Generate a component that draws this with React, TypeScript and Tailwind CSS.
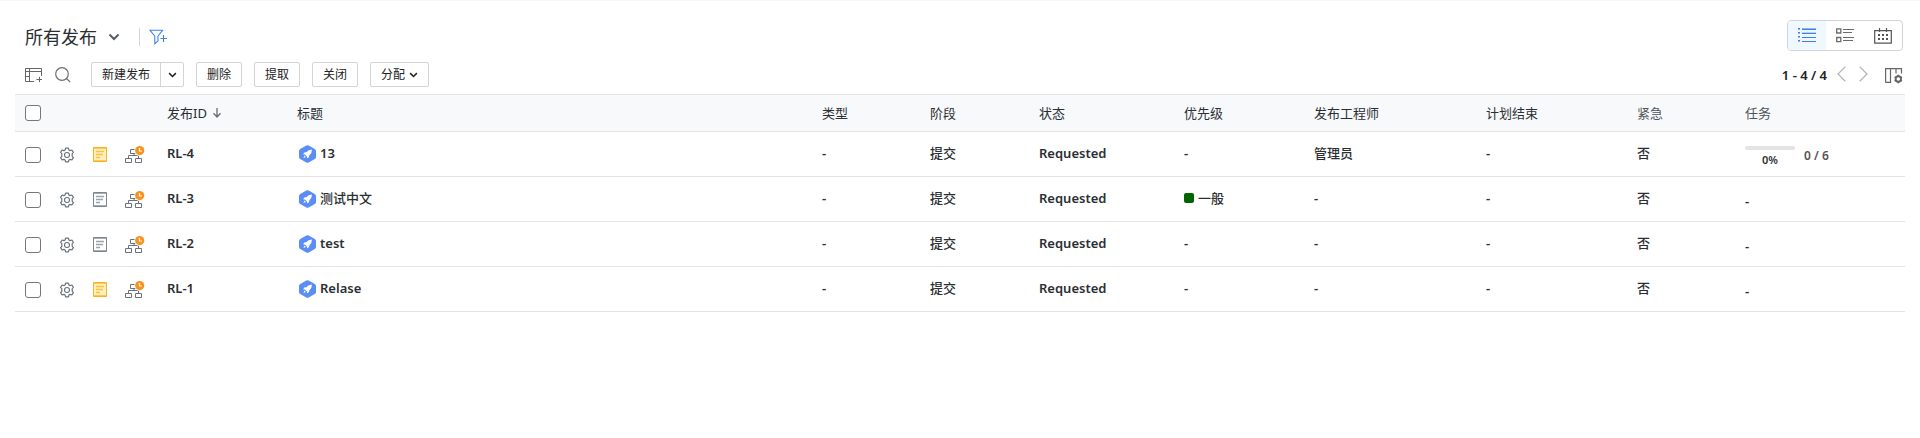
import { useState, type ReactNode } from "react";

type Release = {
  id: string;
  title: string;
  noted: boolean;
  stage: string;
  status: string;
  priority?: string;
  engineer?: string;
  urgent: string;
  tasks?: { done: number; total: number };
};

const releases: Release[] = [
  { id: "RL-4", title: "13", noted: true, stage: "提交", status: "Requested", engineer: "管理员", urgent: "否", tasks: { done: 0, total: 6 } },
  { id: "RL-3", title: "测试中文", noted: false, stage: "提交", status: "Requested", priority: "一般", urgent: "否" },
  { id: "RL-2", title: "test", noted: false, stage: "提交", status: "Requested", urgent: "否" },
  { id: "RL-1", title: "Relase", noted: true, stage: "提交", status: "Requested", urgent: "否" },
];

const isHan = (text: string) => /[\u4e00-\u9fff]/.test(text);

// Han glyphs look heavier than Latin ones at the same weight, so they get a lighter one.
function Value({ children }: { children: string }) {
  return <span className={isHan(children) ? "font-medium" : "font-semibold"}>{children}</span>;
}

function Chevron({ className }: { className: string }) {
  return (
    <svg viewBox="0 0 12 8" className={className} fill="none" stroke="currentColor" aria-hidden="true">
      <path d="M1.5 1.5 L6 6 L10.5 1.5" strokeWidth="2" />
    </svg>
  );
}

function FilterIcon() {
  return (
    <svg width="19" height="16" viewBox="0 0 19 16" fill="none" stroke="#3b82f0" aria-hidden="true">
      <path d="M.8 1.2 H13.8 L9 7 V11.8 L5.8 14.8 V7 Z" strokeWidth="1.1" strokeLinejoin="round" />
      <path d="M11.5 9.5 H18 M14.5 6 V13" strokeWidth="1.1" />
    </svg>
  );
}

function TableAddIcon() {
  return (
    <svg width="18" height="16" viewBox="0 0 18 16" fill="none" stroke="#666" aria-hidden="true">
      <path d="M9 14.5 H.5 V1.5 H16.5 V9 M.5 4.5 H16.5 M4.5 1.5 V14.5 M.5 9.5 H4.5" />
      <path d="M11.5 12.5 H17 M14.5 9.8 V15.2" />
    </svg>
  );
}

function SearchIcon() {
  return (
    <svg width="16" height="16" viewBox="0 0 16 16" fill="none" stroke="#6a6f73" strokeWidth="1.2" aria-hidden="true">
      <circle cx="7" cy="7" r="6.3" />
      <path d="M11.5 11.5 L15.2 15.2" />
    </svg>
  );
}

function ListIcon() {
  return (
    <svg width="18" height="15" viewBox="0 0 18 15" aria-hidden="true">
      <g stroke="#8db7f8" strokeWidth="1">
        <path d="M0 1.5 H2 M4 .5 H18 M0 5.5 H2 M0 9.5 H2 M0 13.5 H2" />
      </g>
      <g stroke="#3b7ff0" strokeWidth="1">
        <path d="M4 1.5 H18 M4 5.5 H18 M4 9.5 H18 M4 13.5 H18 M0 .5 H2 M0 4.5 H2 M0 8.5 H2 M0 12.5 H2" />
      </g>
      <path d="M4 4.5 H18" stroke="#b8d2fb" />
    </svg>
  );
}

function DetailIcon() {
  return (
    <svg width="18" height="15" viewBox="0 0 18 15" fill="none" stroke="#6b6b6b" aria-hidden="true">
      <path d="M.7 .8 H4.8 V5 H.7 Z M.7 9.5 H4.8 V13.6 H.7 Z" strokeWidth="1.3" />
      <path d="M7 1.5 H18 M7 4.5 H16 M7 9.5 H18 M7 12.5 H17" />
    </svg>
  );
}

function CalendarIcon() {
  return (
    <svg width="18" height="16" viewBox="0 0 18 16" fill="none" stroke="#555" aria-hidden="true">
      <path d="M.7 2.7 H17.3 V15.2 H.7 Z" strokeWidth="1.2" />
      <path d="M5.5 0 V4 M12.5 0 V4" strokeWidth="1.2" />
      <path d="M4 7 H6 M8 7 H10 M12 7 H14 M4 11 H6 M8 11 H10 M12 11 H14" strokeWidth="2" />
    </svg>
  );
}

function ColumnSettingsIcon() {
  return (
    <svg width="19" height="17" viewBox="0 0 19 17" fill="none" stroke="#666" aria-hidden="true">
      <path d="M1.6 15.4 V1.7 H17.5 V6.5 M1.6 15.4 H6.5 V1.7 M12 1.7 V6.5" strokeWidth="1.2" />
      <circle cx="14.3" cy="12" r="2.7" strokeWidth="1.9" />
      <path d="M14.3 7.8 V9.3 M14.3 14.7 V16.2 M10.7 9.9 L12 10.7 M16.6 13.3 L17.9 14.1 M10.7 14.1 L12 13.3 M16.6 10.7 L17.9 9.9" strokeWidth="1.8" />
    </svg>
  );
}

function GearIcon() {
  return (
    <svg width="16" height="16" viewBox="0 0 16 16" fill="none" stroke="#6a737b" aria-hidden="true">
      <path
        d="M6.6 1.2 H9.4 L9.9 3 L11.1 3.6 L12.9 3 L14.4 5.3 L13.2 6.7 V9.3 L14.4 10.7 L12.9 13 L11.1 12.4 L9.9 13 L9.4 14.8 H6.6 L6.1 13 L4.9 12.4 L3.1 13 L1.6 10.7 L2.8 9.3 V6.7 L1.6 5.3 L3.1 3 L4.9 3.6 L6.1 3 Z"
        strokeWidth="1.2"
        strokeLinejoin="round"
      />
      <circle cx="8" cy="8" r="2.5" strokeWidth="1.1" />
    </svg>
  );
}

function NoteIcon({ active }: { active: boolean }) {
  const edge = active ? "#fbb117" : "#7c858c";
  const line = active ? "#fcc85a" : "#a9b0b5";
  return (
    <svg width="14" height="15" viewBox="0 0 14 15" fill="none" aria-hidden="true">
      <path d="M.5 .5 H13.5 V14.5 H.5 Z" fill={active ? "#fff0c2" : "#fff"} stroke={edge} />
      <path d="M1 1.5 H13 M1 13.5 H13" stroke={line} />
      <path d="M3 4.5 H11 M3 7.5 H10 M3 10.5 H7" stroke={edge} strokeWidth="1.3" opacity="0.75" />
    </svg>
  );
}

function WorkflowIcon() {
  return (
    <svg width="20" height="18" viewBox="0 0 20 18" fill="none" aria-hidden="true">
      <path
        d="M5.5 3.5 H12.5 V7.5 H5.5 Z M9 7.5 V10 M3.5 12.5 V9.5 H13.5 V12.5 M.5 12.5 H6.5 V16.5 H.5 Z M10.5 12.5 H16.5 V16.5 H10.5 Z"
        stroke="#6a737b"
      />
      <circle cx="14.5" cy="4.6" r="5.2" fill="#fff" />
      <circle cx="14.7" cy="4.6" r="4.6" fill="#f8931f" />
      <path d="M14.5 2 V5 H17" stroke="#fff" strokeWidth="1.2" />
    </svg>
  );
}

function RocketBadge() {
  return (
    <svg width="17" height="18" viewBox="0 0 17 18" aria-hidden="true" className="mt-[2px] shrink-0">
      <path d="M7.3 .5 Q8.5 -.1 9.7 .5 L15.8 3.9 Q17 4.6 17 6 V12 Q17 13.4 15.8 14.1 L9.7 17.5 Q8.5 18.1 7.3 17.5 L1.2 14.1 Q0 13.4 0 12 V6 Q0 4.6 1.2 3.9 Z" fill="#5b8df6" />
      <path d="M13 4.6 Q9.3 4.6 7.3 7.2 L5.2 7.5 L4.2 9.4 L6 9.6 L7.9 11.6 L8.1 13.3 L10 12.3 L10.4 10.2 Q13 8.2 13 4.6 Z M5.6 10.6 L4.4 13 L6.9 12 Z" fill="#fff" />
    </svg>
  );
}

function ToolButton({ children }: { children: ReactNode }) {
  return (
    <button type="button" className="flex h-[25px] items-center gap-1 rounded-xs border border-[#d4d4d4] bg-white px-[10px] text-xs text-[#222]">
      {children}
    </button>
  );
}

function Checkbox({ label }: { label: string }) {
  return (
    <input
      type="checkbox"
      aria-label={label}
      className="size-4 shrink-0 appearance-none rounded-[3px] border border-[#777] bg-white checked:bg-[#3b7ff0]"
    />
  );
}

const views = [
  { label: "列表视图", icon: <ListIcon /> },
  { label: "详细视图", icon: <DetailIcon /> },
  { label: "日历视图", icon: <CalendarIcon /> },
];

export default function App() {
  const [view, setView] = useState(0);
  return (
    <main className="border-t border-[#f7f7f7] bg-white px-[15px] pt-[19px] font-['Noto_Sans','Noto_Sans_CJK_SC',sans-serif] text-[13px] leading-5 text-[#2b2f33]">
      <header className="flex items-center justify-between pr-[2px] pl-[10px]">
        <div className="flex items-center pt-[3px]">
          <h1>
            <button type="button" className="flex items-center gap-[11px] text-lg leading-6 font-normal">
              所有发布
              <Chevron className="h-2 w-3 text-[#555f66]" />
            </button>
          </h1>
          <span className="ml-[19px] h-[18px] w-px bg-[#d5d5d5]" />
          <button type="button" aria-label="筛选" className="ml-[9px]">
            <FilterIcon />
          </button>
        </div>
        <div className="flex h-[31px] overflow-hidden rounded border border-[#d4d4d4]">
          {views.map((item, index) => (
            <button
              key={item.label}
              type="button"
              aria-label={item.label}
              aria-pressed={view === index}
              onClick={() => setView(index)}
              className={view === index ? "flex w-[38px] items-center justify-center bg-[#f0f8ff]" : "flex w-[38px] items-center justify-center"}
            >
              {item.icon}
            </button>
          ))}
        </div>
      </header>

      <div className="mt-[11px] flex items-center justify-between pr-[2px] pl-[10px]">
        <div className="flex items-center gap-3">
          <button type="button" aria-label="添加列">
            <TableAddIcon />
          </button>
          <button type="button" aria-label="搜索" className="mr-2">
            <SearchIcon />
          </button>
          <div className="flex h-[25px] rounded-xs border border-[#d4d4d4] text-xs text-[#222]">
            <button type="button" className="px-[10px]">
              新建发布
            </button>
            <button type="button" aria-label="更多新建选项" className="flex w-[23px] items-center justify-center border-l border-[#d4d4d4]">
              <Chevron className="h-[6px] w-[9px]" />
            </button>
          </div>
          <ToolButton>删除</ToolButton>
          <ToolButton>提取</ToolButton>
          <ToolButton>关闭</ToolButton>
          <ToolButton>
            分配
            <Chevron className="h-[6px] w-[9px]" />
          </ToolButton>
        </div>
        <div className="flex items-center">
          <span className="font-semibold text-[#222]">1 - 4 / 4</span>
          <button type="button" aria-label="上一页" className="ml-[10px] pb-[2px]">
            <svg width="9" height="16" viewBox="0 0 9 16" fill="none" stroke="#b5b5b5" strokeWidth="1.2">
              <path d="M8.3 .8 L1 8 L8.3 15.2" />
            </svg>
          </button>
          <button type="button" aria-label="下一页" className="ml-[13px] pb-[2px]">
            <svg width="9" height="16" viewBox="0 0 9 16" fill="none" stroke="#b5b5b5" strokeWidth="1.2">
              <path d="M.7 .8 L8 8 L.7 15.2" />
            </svg>
          </button>
          <button type="button" aria-label="列设置" className="ml-4 pt-[2px]">
            <ColumnSettingsIcon />
          </button>
        </div>
      </div>

      <table className="mt-[7px] w-full table-fixed border-collapse text-left">
        <colgroup>
          <col className="w-[142px]" />
          <col className="w-[130px]" />
          <col />
          <col className="w-[108px]" />
          <col className="w-[109px]" />
          <col className="w-[145px]" />
          <col className="w-[130px]" />
          <col className="w-[172px]" />
          <col className="w-[151px]" />
          <col className="w-[108px]" />
          <col className="w-[170px]" />
        </colgroup>
        <thead>
          <tr className="h-[37px] border-y border-[#e3e3e3] bg-[#f7f9fb] [&>th]:px-[10px] [&>th]:font-normal">
            <th scope="col">
              <div className="flex">
                <Checkbox label="全选" />
              </div>
            </th>
            <th scope="col">
              <button type="button" className="flex items-center gap-[6px]">
                发布ID
                <svg width="8" height="10" viewBox="0 0 8 10" fill="none" stroke="#666e75" strokeWidth="1.3" aria-hidden="true">
                  <path d="M4 0 V9 M.5 5.3 L4 9 L7.5 5.3" />
                </svg>
              </button>
            </th>
            <th scope="col">标题</th>
            <th scope="col">类型</th>
            <th scope="col">阶段</th>
            <th scope="col">状态</th>
            <th scope="col">优先级</th>
            <th scope="col">发布工程师</th>
            <th scope="col">计划结束</th>
            <th scope="col" className="text-[#50565b]">紧急</th>
            <th scope="col" className="text-[#50565b]">任务</th>
          </tr>
        </thead>
        <tbody>
          {releases.map((release) => (
            <tr key={release.id} className="h-[45px] border-b border-[#e3e3e3] [&>td]:px-[10px] [&>td]:pb-[2px]">
              <td>
                <div className="flex items-center gap-[18px] pt-[3px]">
                  <Checkbox label={`选择 ${release.id}`} />
                  <button type="button" aria-label="设置">
                    <GearIcon />
                  </button>
                  <button type="button" aria-label="备注">
                    <NoteIcon active={release.noted} />
                  </button>
                  <button type="button" aria-label="工作流">
                    <WorkflowIcon />
                  </button>
                </div>
              </td>
              <td>
                <Value>{release.id}</Value>
              </td>
              <td>
                <a href={`#${release.id}`} className="flex items-center gap-1 pl-[2px]">
                  <RocketBadge />
                  <Value>{release.title}</Value>
                </a>
              </td>
              <td>
                <Value>-</Value>
              </td>
              <td>
                <Value>{release.stage}</Value>
              </td>
              <td>
                <Value>{release.status}</Value>
              </td>
              <td>
                {release.priority ? (
                  <span className="flex items-center gap-1">
                    <span className="size-[10px] rounded-xs bg-[#006400]" />
                    <Value>{release.priority}</Value>
                  </span>
                ) : (
                  <Value>-</Value>
                )}
              </td>
              <td>
                <Value>{release.engineer ?? "-"}</Value>
              </td>
              <td>
                <Value>-</Value>
              </td>
              <td>
                <Value>{release.urgent}</Value>
              </td>
              <td className="pt-[5px] font-semibold">
                {release.tasks ? (
                  <div className="flex items-center gap-[9px]">
                    <div className="w-[50px] pt-[2px] text-center text-[11px] leading-4">
                      <div className="mb-[2px] h-1 rounded-full bg-[#e4e4e4]" />
                      0%
                    </div>
                    <span className="text-xs text-[#555]">
                      {release.tasks.done} / {release.tasks.total}
                    </span>
                  </div>
                ) : (
                  "-"
                )}
              </td>
            </tr>
          ))}
        </tbody>
      </table>
    </main>
  );
}
